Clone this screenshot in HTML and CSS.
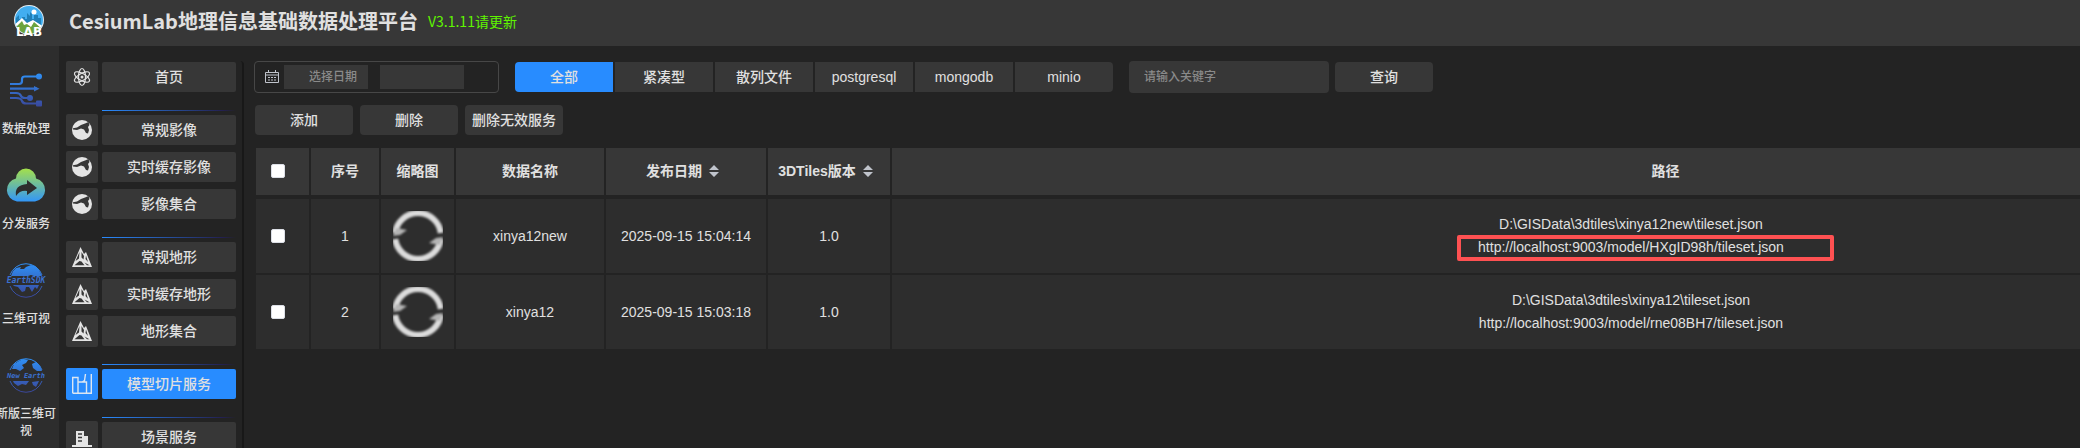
FILE: index.html
```html
<!DOCTYPE html>
<html lang="zh-CN">
<head>
<meta charset="utf-8">
<title>CesiumLab地理信息基础数据处理平台</title>
<link rel="stylesheet" href="styles.css">
</head>
<body>
<svg class="sprite" aria-hidden="true">
  <defs>
    <linearGradient id="blue" gradientUnits="userSpaceOnUse" x1="0" y1="4" x2="0" y2="38"><stop offset="0" stop-color="#2f8ff5"/><stop offset="1" stop-color="#3a4598"/></linearGradient>
    <linearGradient id="cloud" x1="0" y1="0" x2="0" y2="1"><stop offset="0" stop-color="#a4e04a"/><stop offset="1" stop-color="#3296f8"/></linearGradient>
    <filter id="soft" filterUnits="userSpaceOnUse" x="-5" y="-5" width="60" height="60"><feGaussianBlur stdDeviation="1"/></filter>
    <symbol id="globe" viewBox="0 0 20 20">
      <circle cx="10" cy="10" r="10" fill="#e4e4e4"/>
      <path d="M1 8.300L5 7.500L9 5L13 3.500L16.500 2L17.500 5L16 7L17 10L16 13.500L14 13L12 9.500L9 8.500L5 10L1 9.500Z" fill="#373737"/>
    </symbol>
    <symbol id="terrain" viewBox="0 0 20 20">
      <path d="M8.500 0L12 7L14 5L20 20H0Z" fill="#e4e4e4"/>
      <path d="M7.500 5L3.500 14L7 11.500ZM9.500 5V10.500L11.500 12.500L12 9ZM14 8.500L13.500 12L16 15ZM7.500 14L2.500 18.300H12.500L9.500 14.500ZM12.500 15.500L15 18.300H17.500Z" fill="#373737"/>
    </symbol>
    <symbol id="ring" viewBox="0 0 50 50">
      <g filter="url(#soft)"><path d="M2.200 22A23 23 0 0 1 47.800 22M47.800 28A23 23 0 0 1 2.200 28" fill="none" stroke="#dcdcdc" stroke-width="6"/>
      <path d="M0 25L3 17L14 19L7 24ZM50 26L47 34L36 32L43 27Z" fill="#b4b4b4"/></g>
    </symbol>
    <symbol id="sort" viewBox="0 0 10 12"><path d="M5 0L10 5H0ZM5 12L0 7H10Z" fill="#c0c4cc"/></symbol>
  </defs>
</svg>

<header class="header">
  <svg class="logo" viewBox="0 0 32 34" role="img" aria-label="LAB">
    <defs><clipPath id="lc"><circle cx="15" cy="15" r="14"/></clipPath></defs>
    <circle cx="15" cy="15" r="15" fill="#e4edf3"/>
    <g clip-path="url(#lc)">
      <path d="M0 0H30V30H0Z" fill="#42aef0"/>
      <path d="M2 13L5 10V14H8V12H11V14H13V8L16 11V7L18 9V14H20V10H24V13H27V25H2Z" fill="#2080b8"/>
      <circle cx="20" cy="7" r="2.500" fill="#fff"/>
      <path d="M0 20L8 13L13 18L19 15L30 22V31H0Z" fill="#fff"/>
      <path d="M2 22L8 16L10 20L13 19L17 22L20 17L28 24V31H2Z" fill="#6ba33e"/>
    </g>
    <text x="15" y="31" class="logo-text">LAB</text>
  </svg>
  <h1 class="title">CesiumLab地理信息基础数据处理平台</h1>
  <a class="version" href="#">V3.1.11请更新</a>
</header>

<div class="body">
  <nav class="rail" aria-label="主导航">
    <a class="rail-item" href="#">
      <svg class="rail-icon" viewBox="0 0 40 40"><g fill="none" stroke="url(#blue)" stroke-width="2.200"><path d="M4 14H13Q16 14 16 11V9Q16 6.500 19 6.500H32M4 18.600H30V18.800M4 23H10Q14 23 15 26Q16 28 19 28H23M4 28H10Q15 28 16 31Q17 33.500 20 33.500H32"/></g><g fill="url(#blue)"><circle cx="33" cy="6.500" r="3"/><path d="M28 16L33.500 18.800L28 21.500Z"/><circle cx="24" cy="28" r="3"/><rect x="30" y="30.500" width="6" height="6" rx="1"/></g></svg>
      <span class="rail-label">数据处理</span>
    </a>
    <a class="rail-item" href="#">
      <svg class="rail-icon" viewBox="0 0 40 40"><path d="M10 13.500A10 10 0 0 1 30 13.500A11.700 11.700 0 0 1 29 36.500H11A11.700 11.700 0 0 1 10 13.500Z" fill="url(#cloud)"/><path d="M10 31Q8 20 21 19V15L31 23L21 30V26Q14 25 10 31Z" fill="#2d2d2d"/></svg>
      <span class="rail-label">分发服务</span>
    </a>
    <a class="rail-item" href="#">
      <svg class="rail-icon" viewBox="0 0 40 40"><g fill="url(#blue)"><path d="M5 16L7 11L10 8L15 7L14 9L18 9L20 7L25 5L29 6L33 10L36 16H28L25 15L22 16ZM7 25H33L31 29L29 27L26 32L23 27H20L19 31L16 32L12 27L8 26Z"/></g><g fill="none" stroke="url(#blue)" stroke-width="1"><path d="M4 15A17 17 0 0 1 36 15M4 26A17 17 0 0 0 36 26"/></g><text x="20" y="23" class="globe-text">EarthSDK</text></svg>
      <span class="rail-label">三维可视</span>
    </a>
    <a class="rail-item" href="#">
      <svg class="rail-icon" viewBox="0 0 40 40"><g fill="url(#blue)"><path d="M6 14L8 9L13 6L17 4L22 5L20 8L16 10L18 13L14 16L10 14ZM26 9L30 7L34 11L36 16H31L27 13ZM7 26H23L20 30L16 29L12 31L8 28ZM26 27L33 26L30 32L27 30Z"/></g><g fill="none" stroke="url(#blue)" stroke-width="1"><path d="M4 15A17 17 0 0 1 36 15M4 26A17 17 0 0 0 36 26"/></g><text x="20" y="23" class="globe-text small">New Earth</text></svg>
      <span class="rail-label">新版三维可视</span>
    </a>
  </nav>

  <nav class="menu" aria-label="服务">
    <div class="group">
      <a class="row" href="#"><span class="tile"><svg viewBox="0 0 20 20" class="ico"><g fill="none" stroke="#e0e0e0" stroke-width="1.200"><ellipse cx="10" cy="10" rx="3.500" ry="8.500"/><ellipse cx="10" cy="10" rx="3.500" ry="8.500" transform="rotate(60 10 10)"/><ellipse cx="10" cy="10" rx="3.500" ry="8.500" transform="rotate(120 10 10)"/></g><circle cx="10" cy="10" r="1.500" fill="#e0e0e0"/></svg></span><span class="item">首页</span></a>
    </div>
    <div class="group">
      <a class="row" href="#"><span class="tile"><svg class="ico"><use href="#globe"/></svg></span><span class="item">常规影像</span></a>
      <a class="row" href="#"><span class="tile"><svg class="ico"><use href="#globe"/></svg></span><span class="item">实时缓存影像</span></a>
      <a class="row" href="#"><span class="tile"><svg class="ico"><use href="#globe"/></svg></span><span class="item">影像集合</span></a>
    </div>
    <div class="group">
      <a class="row" href="#"><span class="tile"><svg class="ico"><use href="#terrain"/></svg></span><span class="item">常规地形</span></a>
      <a class="row" href="#"><span class="tile"><svg class="ico"><use href="#terrain"/></svg></span><span class="item">实时缓存地形</span></a>
      <a class="row" href="#"><span class="tile"><svg class="ico"><use href="#terrain"/></svg></span><span class="item">地形集合</span></a>
    </div>
    <div class="group">
      <a class="row active" href="#" aria-current="page"><span class="tile"><svg viewBox="0 0 20 20" class="ico"><path d="M0.700 19.300V3.500H6V19.300M0.700 19.300H19.300V0M6 8H14.500V19.300M10 8L12.500 6.500L13.500 0" fill="none" stroke="#dce6f2" stroke-width="1.400"/></svg></span><span class="item">模型切片服务</span></a>
    </div>
    <div class="group">
      <a class="row" href="#"><span class="tile"><svg viewBox="0 0 20 20" class="ico"><path d="M0 18H4V4H12V9H16V18H20V20H0Z" fill="#e4e4e4"/><path d="M6 7H10M6 10.500H10M6 14H10" stroke="#373737" stroke-width="1.300"/></svg></span><span class="item">场景服务</span></a>
    </div>
  </nav>

  <main class="main">
    <form class="toolbar">
      <div class="dates">
        <svg class="cal" viewBox="0 0 14 14"><path d="M.5 2.500H13.500V12.500H.5ZM.5 5H13.500M3.500 0V3M10.500 0V3M3 7.500H5M6 7.500H8M9 7.500H11M3 10H5M6 10H8M9 10H11" fill="none" stroke="#c0c4cc" stroke-width="1"/></svg>
        <input class="date" type="text" placeholder="选择日期" aria-label="开始日期">
        <input class="date" type="text" aria-label="结束日期">
      </div>
      <div class="tabs">
        <button type="button" class="btn tab on">全部</button>
        <button type="button" class="btn tab">紧凑型</button>
        <button type="button" class="btn tab">散列文件</button>
        <button type="button" class="btn tab">postgresql</button>
        <button type="button" class="btn tab">mongodb</button>
        <button type="button" class="btn tab">minio</button>
      </div>
      <div class="search">
        <input class="keyword" type="text" placeholder="请输入关键字" aria-label="关键字">
        <button type="button" class="btn">查询</button>
      </div>
    </form>
    <div class="actions">
      <button type="button" class="btn">添加</button>
      <button type="button" class="btn">删除</button>
      <button type="button" class="btn">删除无效服务</button>
    </div>
    <table class="table">
      <colgroup><col class="c-check"><col class="c-no"><col class="c-thumb"><col class="c-name"><col class="c-date"><col class="c-ver"><col></colgroup>
      <thead>
        <tr>
          <th class="check"><input type="checkbox" aria-label="全选"></th>
          <th>序号</th><th>缩略图</th><th>数据名称</th>
          <th><span class="sortable">发布日期<svg class="sort"><use href="#sort"/></svg></span></th>
          <th><span class="sortable">3DTiles版本<svg class="sort"><use href="#sort"/></svg></span></th>
          <th>路径</th>
        </tr>
      </thead>
      <tbody>
        <tr>
          <td class="check"><input type="checkbox" aria-label="选择 xinya12new"></td>
          <td>1</td>
          <td><svg class="thumb"><use href="#ring"/></svg></td>
          <td>xinya12new</td><td>2025-09-15 15:04:14</td><td>1.0</td>
          <td class="path"><div>D:\GISData\3dtiles\xinya12new\tileset.json</div><div><span class="marked">http://localhost:9003/model/HXgID98h/tileset.json</span></div></td>
        </tr>
        <tr>
          <td class="check"><input type="checkbox" aria-label="选择 xinya12"></td>
          <td>2</td>
          <td><svg class="thumb"><use href="#ring"/></svg></td>
          <td>xinya12</td><td>2025-09-15 15:03:18</td><td>1.0</td>
          <td class="path"><div>D:\GISData\3dtiles\xinya12\tileset.json</div><div>http://localhost:9003/model/rne08BH7/tileset.json</div></td>
        </tr>
      </tbody>
    </table>
  </main>
</div>
</body>
</html>
```
FILE: styles.css
```css
* { box-sizing: border-box; }
body {
  margin: 0;
  height: 100vh;
  overflow: hidden;
  display: flex;
  flex-direction: column;
  background: #232323;
  color: #e0e0e0;
  font: 500 14px/20px "Liberation Sans", "Noto Sans CJK SC", sans-serif;
}
a { color: inherit; text-decoration: none; }
input, button { font: inherit; color: inherit; border: 0; }
.sprite { position: absolute; width: 0; height: 0; }

.header {
  flex: none;
  display: flex;
  align-items: center;
  height: 46px;
  padding-left: 14px;
  background: #373737;
}
.logo { width: 32px; height: 34px; margin: 0 23px 2px 0; }
.logo-text {
  font: bold 12px "DejaVu Sans", sans-serif;
  text-anchor: middle;
  fill: #fff;
}
.title {
  margin: 0 10px 4px 0;
  font: bold 20px/28px "Noto Sans CJK SC", sans-serif;
}
.version {
  padding-bottom: 4px;
  color: #5ff500;
  font: 14px/20px "Noto Sans CJK SC", sans-serif;
}

.body { flex: 1; min-height: 0; display: flex; }

.rail {
  flex: none;
  width: 59px;
  padding: 24px 7px 0 0;
  background: #2d2d2d;
}
.rail-item {
  display: flex;
  flex-direction: column;
  align-items: center;
  min-height: 95px;
}
.rail-icon { width: 40px; height: 40px; margin-bottom: 11px; overflow: visible; }
.rail-label {
  max-width: 60px;
  margin: 0 -4px;
  text-align: center;
  font-size: 12px;
  line-height: 17px;
}
.globe-text {
  font: italic bold 8px "DejaVu Sans Mono", monospace;
  text-anchor: middle;
  fill: #3b70cf;
}
.small { font-size: 7px; }

.menu {
  flex: none;
  width: 185px;
  margin-top: 15px;
  padding: 0 6px 0 7px;
  border-right: 2px solid #181818;
  border-top-right-radius: 4px;
  overflow: hidden;
}
.group { display: grid; gap: 5px; margin-bottom: 16px; }
.group + .group::before {
  content: "";
  height: 1px;
  margin: 1px 0 -2px 36px;
  background: linear-gradient(90deg, #2a8cff, #232050 90%, #232323);
}
.row { display: flex; align-items: center; gap: 4px; }
.tile {
  display: grid;
  place-items: center;
  width: 32px;
  height: 32px;
  border-radius: 2px;
  background: #373737;
}
.ico { width: 20px; height: 20px; }
.item {
  flex: 1;
  border-radius: 2px;
  background: #373737;
  line-height: 30px;
  text-align: center;
}
.active .tile, .active .item { background: #288cff; }

.main { flex: 1; min-width: 0; padding: 15px 0 0 10px; overflow: hidden; }
.toolbar { display: flex; align-items: center; gap: 16px; }
.btn {
  width: 98px;
  height: 30px;
  padding: 0;
  border-radius: 4px;
  background: #373737;
  line-height: 30px;
}
.dates {
  display: flex;
  align-items: center;
  gap: 12px;
  width: 245px;
  height: 32px;
  padding-left: 10px;
  border: 1px solid #474747;
  border-radius: 4px;
}
.cal { width: 14px; height: 14px; margin-right: -7px; }
.date {
  width: 84px;
  height: 24px;
  padding: 0 0 0 25px;
  background: #373737;
  font-size: 12px;
}
input::placeholder { color: #8a8a8a; opacity: 1; }
.tabs { display: flex; gap: 2px; }
.tab { border-radius: 0; }
.tab:first-child { border-radius: 4px 0 0 4px; }
.tab:last-child { border-radius: 0 4px 4px 0; }
.on { background: #288cff; }
.search { display: flex; align-items: center; gap: 6px; }
.keyword {
  width: 200px;
  height: 32px;
  padding: 0 15px;
  border-radius: 4px;
  background: #373737;
  font-size: 12px;
}
.actions { display: flex; gap: 7px; padding: 12px 0 11px 1px; }

.table {
  width: calc(100% + 361px);
  table-layout: fixed;
  border-spacing: 2px;
  text-align: center;
}
.c-check { width: 53px; }
.c-no { width: 68px; }
.c-thumb { width: 73px; }
.c-name { width: 148px; }
.c-date { width: 160px; }
.c-ver { width: 122px; }
th {
  height: 49px;
  padding: 0 0 2px;
  border-bottom: 2px solid transparent;
  background: #373737 padding-box;
}
td { height: 74px; padding: 0; background: #2d2d2d; }
.check { text-align: left; padding-left: 15px; }
.check input {
  appearance: none;
  display: block;
  width: 14px;
  height: 14px;
  margin: 0;
  border: 1px solid #dcdfe6;
  border-radius: 2px;
  background: #fff;
}
.sortable { display: inline-flex; align-items: center; }
.sort { width: 10px; height: 12px; margin: 0 7px; }
.thumb { display: block; width: 50px; height: 50px; margin: 0 auto; }
.path { padding-right: 69px; line-height: 23px; }
.marked { position: relative; }
.marked::after {
  content: "";
  position: absolute;
  inset: -4px -50px -6px -21px;
  border: 4px solid #fe5152;
  border-radius: 2px;
}
```
